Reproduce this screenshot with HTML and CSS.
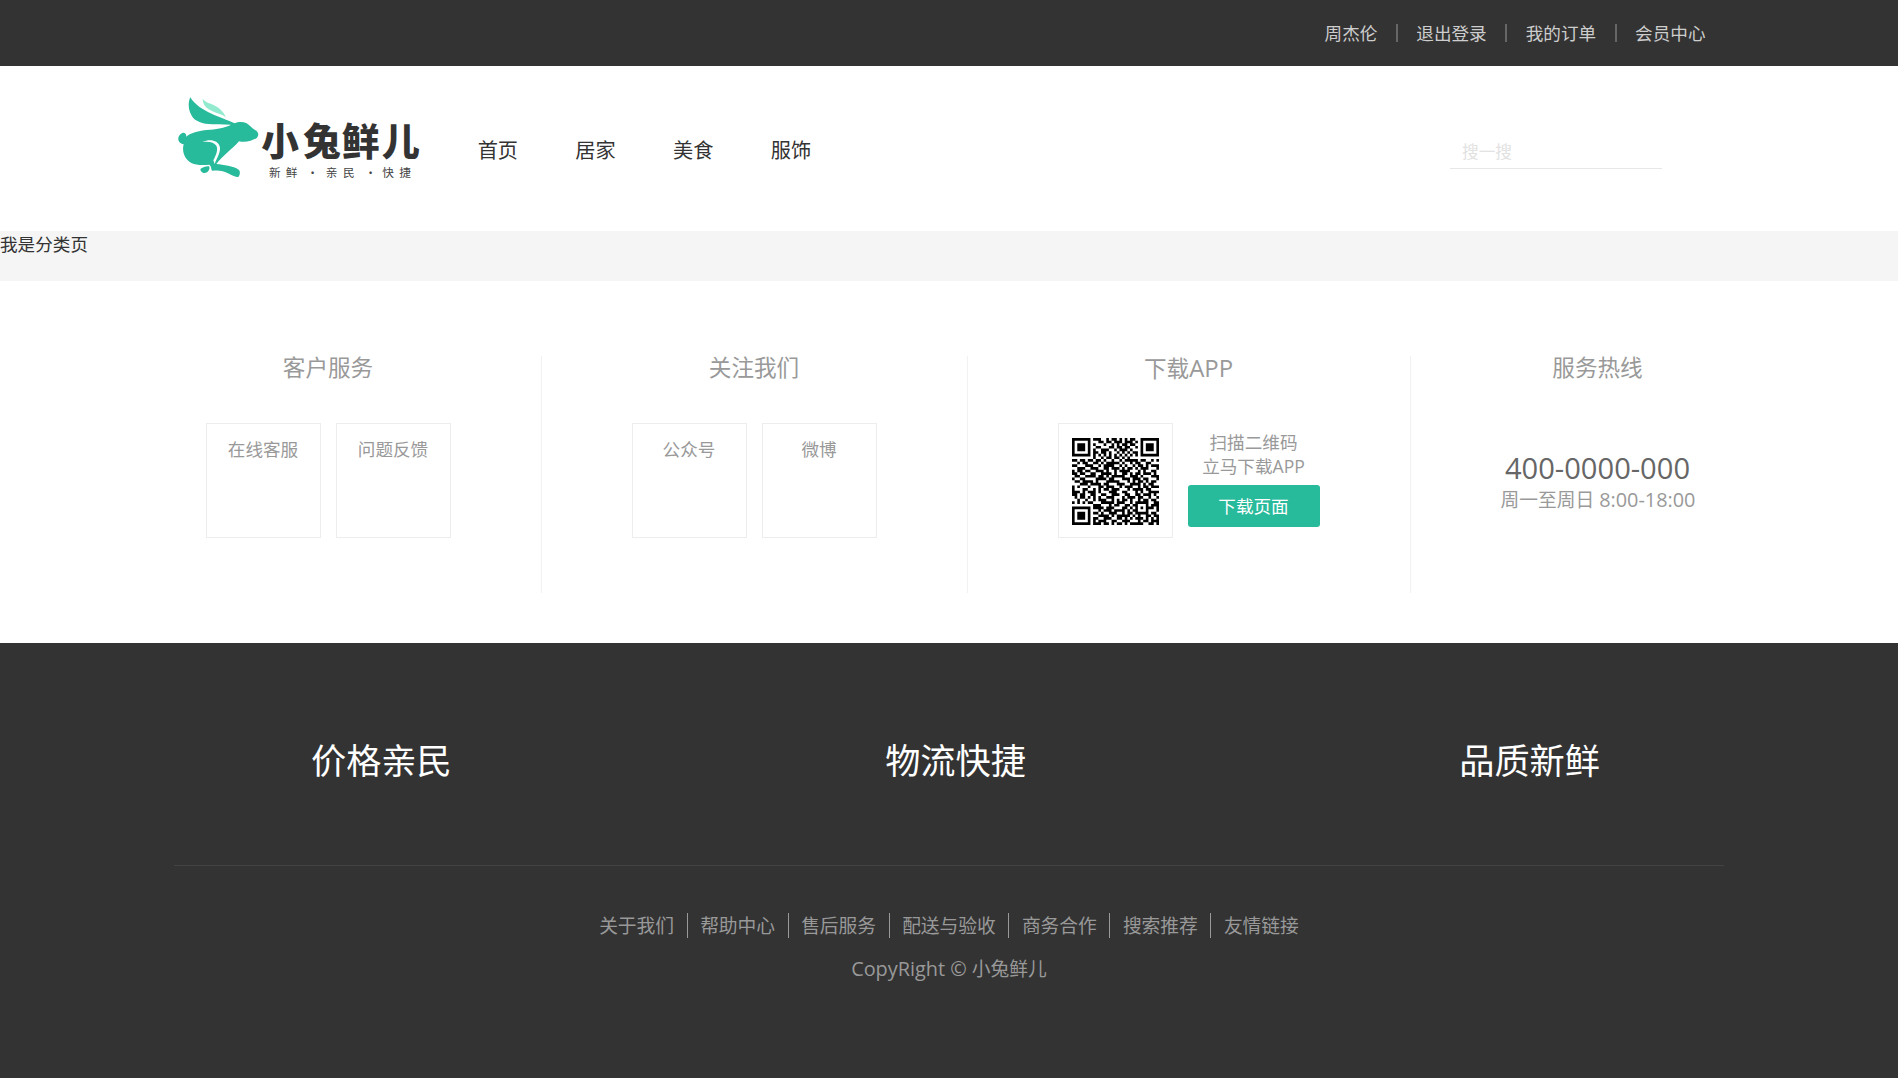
FILE: index.html
```html
<!DOCTYPE html>
<html lang="zh-CN">
<head>
<meta charset="utf-8">
<title>小兔鲜儿</title>
<link rel="stylesheet" href="styles.css">
</head>
<body>
<nav class="topbar">
  <ul class="container topbar-list">
    <li><a>周杰伦</a></li>
    <li><a>退出登录</a></li>
    <li><a>我的订单</a></li>
    <li><a>会员中心</a></li>
  </ul>
</nav>
<header class="header">
  <div class="container header-inner">
    <svg class="logo" viewBox="42 0 758 360" role="img" aria-label="小兔鲜儿">
      <g fill="#27ba9b">
        <path d="M91 52C82 72 86 96 99 113C113 129 143 134 176 133L213 134C199 142 176 147 151 149C119 151 91 158 79 170C79 160 73 157 67 159C56 164 51 177 58 186C62 191 68 192 71 193C65 214 74 238 94 249C110 257 133 255 148 254C157 261 151 270 158 272C177 270 189 272 207 281C217 287 229 292 235 291C241 283 241 273 236 269C220 257 190 255 169 252C190 225 216 208 237 184C258 189 280 181 291 173C298 166 295 154 285 150C276 146 270 136 260 130C247 124 234 126 224 130C187 112 117 96 91 52Z"/>
        <path d="M147 259C136 259 123 263 121 269C124 278 134 282 141 277C146 273 151 266 147 259Z"/>
      </g>
      <path fill="#92ebcf" d="M128 56C139 71 164 72 179 86Q191 97 198 111C182 101 163 99 146 88C134 80 128 70 128 56Z"/>
      <path fill="#fff" d="M127 186C150 175 174 181 179 199C184 215 171 233 164 252L160 241C169 224 176 207 168 196C160 185 144 184 127 186Z"/>
      <text class="logo-name" x="304 430 545 666" y="224">小兔鲜儿</text>
      <text class="logo-slogan" x="327 377 440 497 549 614 667 718" y="291">新鲜·亲民·快捷</text>
    </svg>
    <ul class="nav">
      <li><a>首页</a></li>
      <li><a>居家</a></li>
      <li><a>美食</a></li>
      <li><a>服饰</a></li>
    </ul>
    <div class="search"><input type="text" placeholder="搜一搜"></div>
  </div>
</header>
<main class="main">我是分类页</main>
<footer>
  <div class="container contact">
    <dl>
      <dt>客户服务</dt>
      <dd class="tile">在线客服</dd>
      <dd class="tile">问题反馈</dd>
    </dl>
    <dl>
      <dt>关注我们</dt>
      <dd class="tile">公众号</dd>
      <dd class="tile">微博</dd>
    </dl>
    <dl>
      <dt class="app-title">下载<span class="latin">APP</span></dt>
      <dd class="tile qr"><svg id="qr" viewBox="0 0 33 33"><path/></svg></dd>
      <dd class="download"><span>扫描二维码</span><span>立马下载APP</span><a class="btn">下载页面</a></dd>
    </dl>
    <dl>
      <dt>服务热线</dt>
      <dd class="hotline"><span class="phone">400-0000-000</span><small>周一至周日 <span class="latin">8:00-18:00</span></small></dd>
    </dl>
  </div>
  <div class="extra">
    <div class="container">
      <div class="slogan"><span>价格亲民</span><span>物流快捷</span><span>品质新鲜</span></div>
      <ul class="links">
        <li><a>关于我们</a></li>
        <li><a>帮助中心</a></li>
        <li><a>售后服务</a></li>
        <li><a>配送与验收</a></li>
        <li><a>商务合作</a></li>
        <li><a>搜索推荐</a></li>
        <li><a>友情链接</a></li>
      </ul>
      <p class="copyright"><span class="latin">CopyRight © </span>小兔鲜儿</p>
    </div>
  </div>
</footer>
<script src="qr.js"></script>
</body>
</html>
```
FILE: qr.js
```js
// One string per row of modules; 1 is a dark module.
const rows = [
  "111111101110010110101011001111111",
  "100000100011011011101110101000001",
  "101110101000100101011011001011101",
  "101110100110001101101100101011101",
  "101110101001110010111010001011101",
  "100000101101101001010101101000001",
  "111111101010101010101010101111111",
  "000000001001011011010100000000000",
  "110110110110100100101111101100101",
  "001011001101011111010010110011000",
  "110001110010111100101001011010111",
  "001110011100110111010110101110001",
  "101101100111010010111100010100110",
  "110110011001111010011010110111010",
  "011001111011010111110011101000111",
  "100110000111101100011101110110001",
  "011011110100011111000101011010110",
  "000111011110110001110011110101100",
  "101000100011011100101110010110111",
  "100011001010110111000101111011000",
  "111010111010001110011000101001111",
  "110110011001100111001100110111010",
  "010110101010011100010111011001001",
  "001001001011100101011010010110110",
  "101010110001111101110010111110011",
  "000000001110001011001101100010111",
  "111111101111011100011010101011101",
  "100000100010111011110101100010001",
  "101110101101001110010110111110110",
  "101110100011110101111101010011011",
  "101110101100111001101010111010101",
  "100000101011100110011100010110111",
  "111111101110110101101011111001101"
];
let d = "";
rows.forEach((row, y) => {
  for (const run of row.matchAll(/1+/g)) {
    d += `M${run.index} ${y}h${run[0].length}v1h-${run[0].length}z`;
  }
});
document.querySelector("#qr path").setAttribute("d", d);
```
FILE: styles.css
```css
* { box-sizing: border-box; }
body, ul, dl, dt, dd, p { margin: 0; padding: 0; }
ul { list-style: none; }
body {
  background: #fff;
  color: #333;
  font: 400 17.6px/1.4 "Open Sans", "Noto Sans CJK SC", sans-serif;
}
.container { width: 1550px; margin: 0 auto; }
.latin { font-size: 1.06em; line-height: 1; }

.topbar { height: 66px; background: #333; }
.topbar-list { display: flex; justify-content: flex-end; align-items: center; height: 66px; }
.topbar-list a { display: block; padding: 0 18.5px; line-height: 18px; color: #cdcdcd; }
.topbar-list li + li a { border-left: 2px solid #666; }

.header { height: 165px; }
.header-inner { display: flex; align-items: flex-start; padding-top: 14px; }
.logo { width: 252.67px; height: 120px; flex: none; }
.logo-name { font-family: "Noto Sans CJK SC", sans-serif; font-size: 113px; font-weight: 900; fill: #333; }
.logo-slogan { font-family: "Noto Sans CJK SC", sans-serif; font-size: 35px; font-weight: 400; fill: #444; }
.nav { display: flex; gap: 57.3px; margin: 54px 0 0 51px; font-size: 20.2px; line-height: 32px; }
.search { width: 212px; height: 40px; margin: 49px 62px 0 auto; border-bottom: 1px solid #e7e7e7; }
.search input { width: 100%; height: 44px; padding: 0 0 0 12px; border: 0; outline: 0; background: none; font: inherit; font-size: 16.7px; }
.search input::placeholder { color: #e2e2e2; opacity: 1; }

.main { height: 50px; background: #f5f5f5; line-height: 27px; }

.contact { display: flex; height: 362px; padding: 75px 0 50px 31.5px; color: #999; }
.contact dl { display: flex; flex: none; flex-wrap: wrap; align-content: flex-start; gap: 44px 15px; height: 237px; padding: 0 90px; border-right: 1px solid #f2f2f2; text-align: center; }
.contact dl:first-child { width: 336px; padding-left: 0; }
.contact dl:nth-child(2) { width: 426px; }
.contact dl:nth-child(3) { width: 443px; }
.contact dl:last-child { width: 284px; padding-right: 0; border: 0; }
.contact dt { width: 100%; height: 23px; font-size: 22.6px; line-height: 23px; }
.contact .app-title { line-height: 21px; }
.tile { width: 115px; height: 115px; padding: 13px 0 0; border: 1px solid #ededed; }
.qr { padding: 14px 0 0 13px; text-align: left; }
.qr svg { display: block; width: 87px; height: 87px; }
.download { width: 132px; padding-top: 7px; line-height: 24px; }
.download span { display: block; }
.btn { display: block; height: 42px; margin-top: 7px; border-radius: 3px; background: #27ba9b; color: #fff; line-height: 42px; }
.hotline { padding-top: 26px; }
.phone { display: block; color: #666; font-size: 29.1px; line-height: 38px; }
.hotline small { display: block; width: 194px; font-size: 18.75px; line-height: 26px; white-space: nowrap; }

.extra { height: 435px; background: #333; }
.slogan { display: flex; justify-content: space-between; height: 223px; padding: 91px 124px 0 137px; border-bottom: 1px solid #434343; color: #fff; font-size: 35.2px; line-height: 52px; }
.links { display: flex; justify-content: center; margin-top: 47px; color: #999; font-size: 18.75px; line-height: 25px; }
.links a { display: block; padding: 1px 12.5px 0; line-height: 24px; }
.links li + li { border-left: 1px solid #999; }
.copyright { margin-top: 18px; color: #999; font-size: 18.75px; line-height: 25px; text-align: center; }
```
